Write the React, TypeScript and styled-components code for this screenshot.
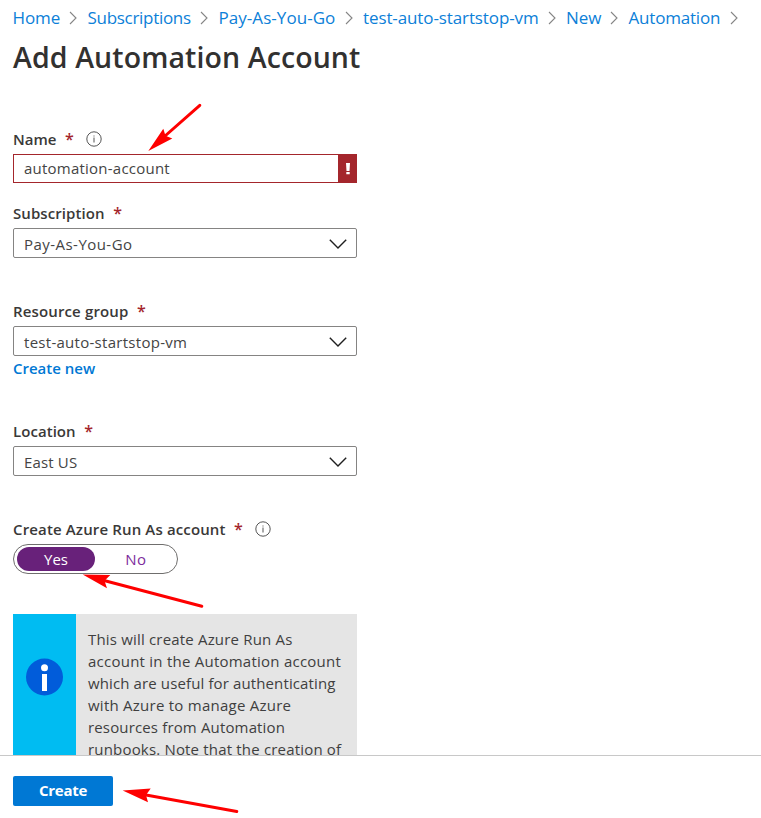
import React from "react";
import styled, { createGlobalStyle } from "styled-components";

const GlobalStyle = createGlobalStyle`
  *, *::before, *::after { box-sizing: border-box; }
  body {
    margin: 0;
    background: #fff;
    color: #323130;
    font-family: "Open Sans", "Noto Sans", sans-serif;
    font-size: 15px;
  }
`;

const Page = styled.div`
  position: relative;
  display: flex;
  flex-direction: column;
  width: 761px;
  height: 818px;
  overflow: hidden;
`;

const Blade = styled.main`
  flex: 1;
  min-height: 0;
  overflow: hidden;
  padding-left: 13px;
`;

const Breadcrumb = styled.nav`
  display: flex;
  margin-left: -0.5px;
  height: 35px;
  align-items: center;
`;

const Crumb = styled.a<{ $width: number; $track: number }>`
  display: flex;
  flex: none;
  align-items: center;
  justify-content: space-between;
  width: ${(p) => p.$width}px;
  padding-right: 10.5px;
  color: #0c80d8;
  font-size: 17px;
  line-height: 25px;
  letter-spacing: ${(p) => p.$track}px;
  white-space: nowrap;
`;

const Title = styled.h1`
  margin: 0;
  height: 45px;
  font-size: 28.5px;
  font-weight: 600;
  line-height: 44px;
  letter-spacing: 0.1px;
  white-space: nowrap;
`;

const Form = styled.div`
  display: flex;
  flex-direction: column;
  width: 344px;
  padding-top: 49px;
`;

const Field = styled.section<{ $gap: number }>`
  display: flex;
  flex-direction: column;
  margin-bottom: ${(p) => p.$gap}px;
`;

const Label = styled.label<{ $track: number }>`
  display: flex;
  align-items: center;
  height: 20px;
  margin-bottom: 5px;
  color: #3a3938;
  font-weight: 600;
  line-height: 20px;
  letter-spacing: ${(p) => p.$track}px;
  white-space: nowrap;
`;

const Required = styled.span`
  margin: 0 12px 0 8.5px;
  color: #a4262c;
  font-size: 16px;
  letter-spacing: 0;
`;

const TextBox = styled.div`
  display: flex;
  height: 29px;
  border: 1px solid #a4262c;
`;

const Value = styled.span<{ $track: number }>`
  flex: 1;
  padding-left: 10px;
  color: #444;
  line-height: 26px;
  letter-spacing: ${(p) => p.$track}px;
  white-space: nowrap;
`;

const ErrorFlag = styled.span`
  display: flex;
  align-items: center;
  justify-content: center;
  width: 18px;
  padding-left: 2px;
  background: #a4262c;
`;

const SelectBox = styled.div`
  display: flex;
  align-items: center;
  height: 30px;
  padding: 2px 9.5px 0 0;
  border: 1px solid #858483;
  border-radius: 2px;

  ${Value} { line-height: 28px; }
`;

const CreateNew = styled.a`
  height: 20px;
  margin-top: 2px;
  color: #0078d4;
  font-weight: 600;
  line-height: 21px;
`;

const Toggle = styled.div`
  display: flex;
  align-items: center;
  width: 165px;
  height: 30px;
  padding-left: 3px;
  border: 1px solid #6f6e6d;
  border-radius: 15px;
`;

const Option = styled.span<{ $on?: boolean }>`
  flex: none;
  width: ${(p) => (p.$on ? 78 : 82)}px;
  height: 24px;
  border-radius: 12px;
  background: ${(p) => (p.$on ? "#68217a" : "transparent")};
  color: ${(p) => (p.$on ? "#fff" : "#7d2c9c")};
  letter-spacing: ${(p) => (p.$on ? 0 : 0.5)}px;
  line-height: 25px;
  text-align: center;
`;

const Notice = styled.aside`
  display: flex;
  height: 200px;
  background: #e5e5e5;
`;

const NoticeMark = styled.div`
  display: flex;
  justify-content: center;
  width: 63px;
  padding-top: 44px;
  background: #00bcf2;
`;

const NoticeText = styled.p`
  margin: 0;
  padding: 14px 0 0 12px;
  color: #3f3f3f;
`;

const Line = styled.span<{ $track: number }>`
  display: block;
  line-height: 22px;
  letter-spacing: ${(p) => p.$track}px;
  white-space: nowrap;
`;

const Footer = styled.footer`
  flex: none;
  height: 63px;
  padding: 20px 13px;
  border-top: 1px solid #c8c8c8;
  background: #fff;
`;

const CreateButton = styled.button`
  display: block;
  width: 100px;
  height: 30px;
  padding: 0 0 2px;
  border: 0;
  border-radius: 2px;
  background: #0078d4;
  color: #fff;
  font: 700 15px/28px "Open Sans", sans-serif;
  letter-spacing: -0.25px;
`;

const Annotations = styled.svg`
  position: absolute;
  inset: 0;
  pointer-events: none;
`;

const CrumbChevron = () => (
  <svg width="8" height="14" viewBox="0 0 8 14" fill="none" stroke="#858585" strokeWidth="1.1">
    <path d="M1 1 7 7 1 13" />
  </svg>
);

const SelectChevron = () => (
  <svg width="18" height="10" viewBox="0 0 18 10" fill="none" stroke="#1f1f1f" strokeWidth="1.4">
    <path d="M.8.8 9 9 17.2.8" />
  </svg>
);

const InfoIcon = () => (
  <svg width="16" height="16" viewBox="0 0 16 16">
    <circle cx="8" cy="8" r="7.2" fill="none" stroke="#555" />
    <path d="M7.5 4.5h1v1h-1zM7.5 6.5h1v5h-1z" fill="#555" />
  </svg>
);

const ErrorIcon = () => (
  <svg width="4" height="12" viewBox="0 0 4 12" fill="#fff">
    <path d="M0 0h4L3.5 8h-3zM.3 9h3.4v2.2H.3z" />
  </svg>
);

const NoticeIcon = () => (
  <svg width="38" height="38" viewBox="0 0 38 38">
    <circle cx="18.5" cy="19" r="18.5" fill="#015cda" />
    <circle cx="18.5" cy="9.8" r="3.5" fill="#fff" />
    <path d="M16 16h5v17h-5z" fill="#fff" />
  </svg>
);

const crumbs = [
  { text: "Home", width: 75, track: -0.1 },
  { text: "Subscriptions", width: 131, track: -0.3 },
  { text: "Pay-As-You-Go", width: 144.5, track: 0.05 },
  { text: "test-auto-startstop-vm", width: 203, track: -0.11 },
  { text: "New", width: 62.5, track: -0.1 },
  { text: "Automation", width: 119.5, track: -0.2 },
];

const noticeLines = [
  { text: "This will create Azure Run As", track: 0.18 },
  { text: "account in the Automation account", track: 0.24 },
  { text: "which are useful for authenticating", track: 0.12 },
  { text: "with Azure to manage Azure", track: 0.25 },
  { text: "resources from Automation", track: 0.15 },
  { text: "runbooks. Note that the creation of", track: 0.18 },
];

function Select({ text, track }: { text: string; track: number }) {
  return (
    <SelectBox>
      <Value $track={track}>{text}</Value>
      <SelectChevron />
    </SelectBox>
  );
}

export default function App() {
  return (
    <Page>
      <GlobalStyle />
      <Blade>
        <Breadcrumb>
          {crumbs.map((c) => (
            <Crumb key={c.text} $width={c.width} $track={c.track}>
              {c.text}
              <CrumbChevron />
            </Crumb>
          ))}
        </Breadcrumb>
        <Title>Add Automation Account</Title>
        <Form>
          <Field $gap={20}>
            <Label $track={0}>Name<Required>*</Required><InfoIcon /></Label>
            <TextBox>
              <Value $track={0.23}>automation-account</Value>
              <ErrorFlag><ErrorIcon /></ErrorFlag>
            </TextBox>
          </Field>
          <Field $gap={43}>
            <Label $track={0.08}>Subscription<Required>*</Required></Label>
            <Select text="Pay-As-You-Go" track={0.46} />
          </Field>
          <Field $gap={43}>
            <Label $track={0.14}>Resource group<Required>*</Required></Label>
            <Select text="test-auto-startstop-vm" track={0.28} />
            <CreateNew>Create new</CreateNew>
          </Field>
          <Field $gap={43}>
            <Label $track={0.05}>Location<Required>*</Required></Label>
            <Select text="East US" track={0.15} />
          </Field>
          <Field $gap={40}>
            <Label $track={0.14}>Create Azure Run As account<Required>*</Required><InfoIcon /></Label>
            <Toggle>
              <Option $on>Yes</Option>
              <Option>No</Option>
            </Toggle>
          </Field>
          <Notice>
            <NoticeMark><NoticeIcon /></NoticeMark>
            <NoticeText>
              {noticeLines.map((l) => (
                <Line key={l.text} $track={l.track}>{l.text}</Line>
              ))}
            </NoticeText>
          </Notice>
        </Form>
      </Blade>
      <Footer>
        <CreateButton>Create</CreateButton>
      </Footer>
      <Annotations width="761" height="818" viewBox="0 0 761 818" fill="#fe0000" stroke="#fe0000">
        <path d="M199.8 105.3 165 136" strokeWidth="3" strokeLinecap="round" />
        <path d="M148.3 150.9 163.3 128.7 165.5 135.7 172.3 138.5Z" stroke="none" />
        <path d="M201.8 606.3 104 580.5" strokeWidth="3" strokeLinecap="round" />
        <path d="M82.7 574.5 110.3 575 104.5 580.8 107 588.3Z" stroke="none" />
        <path d="M236.8 811.5 146 795" strokeWidth="3" strokeLinecap="round" />
        <path d="M122.7 790.5 150.7 788.5 146 795 148 802.3Z" stroke="none" />
      </Annotations>
    </Page>
  );
}
